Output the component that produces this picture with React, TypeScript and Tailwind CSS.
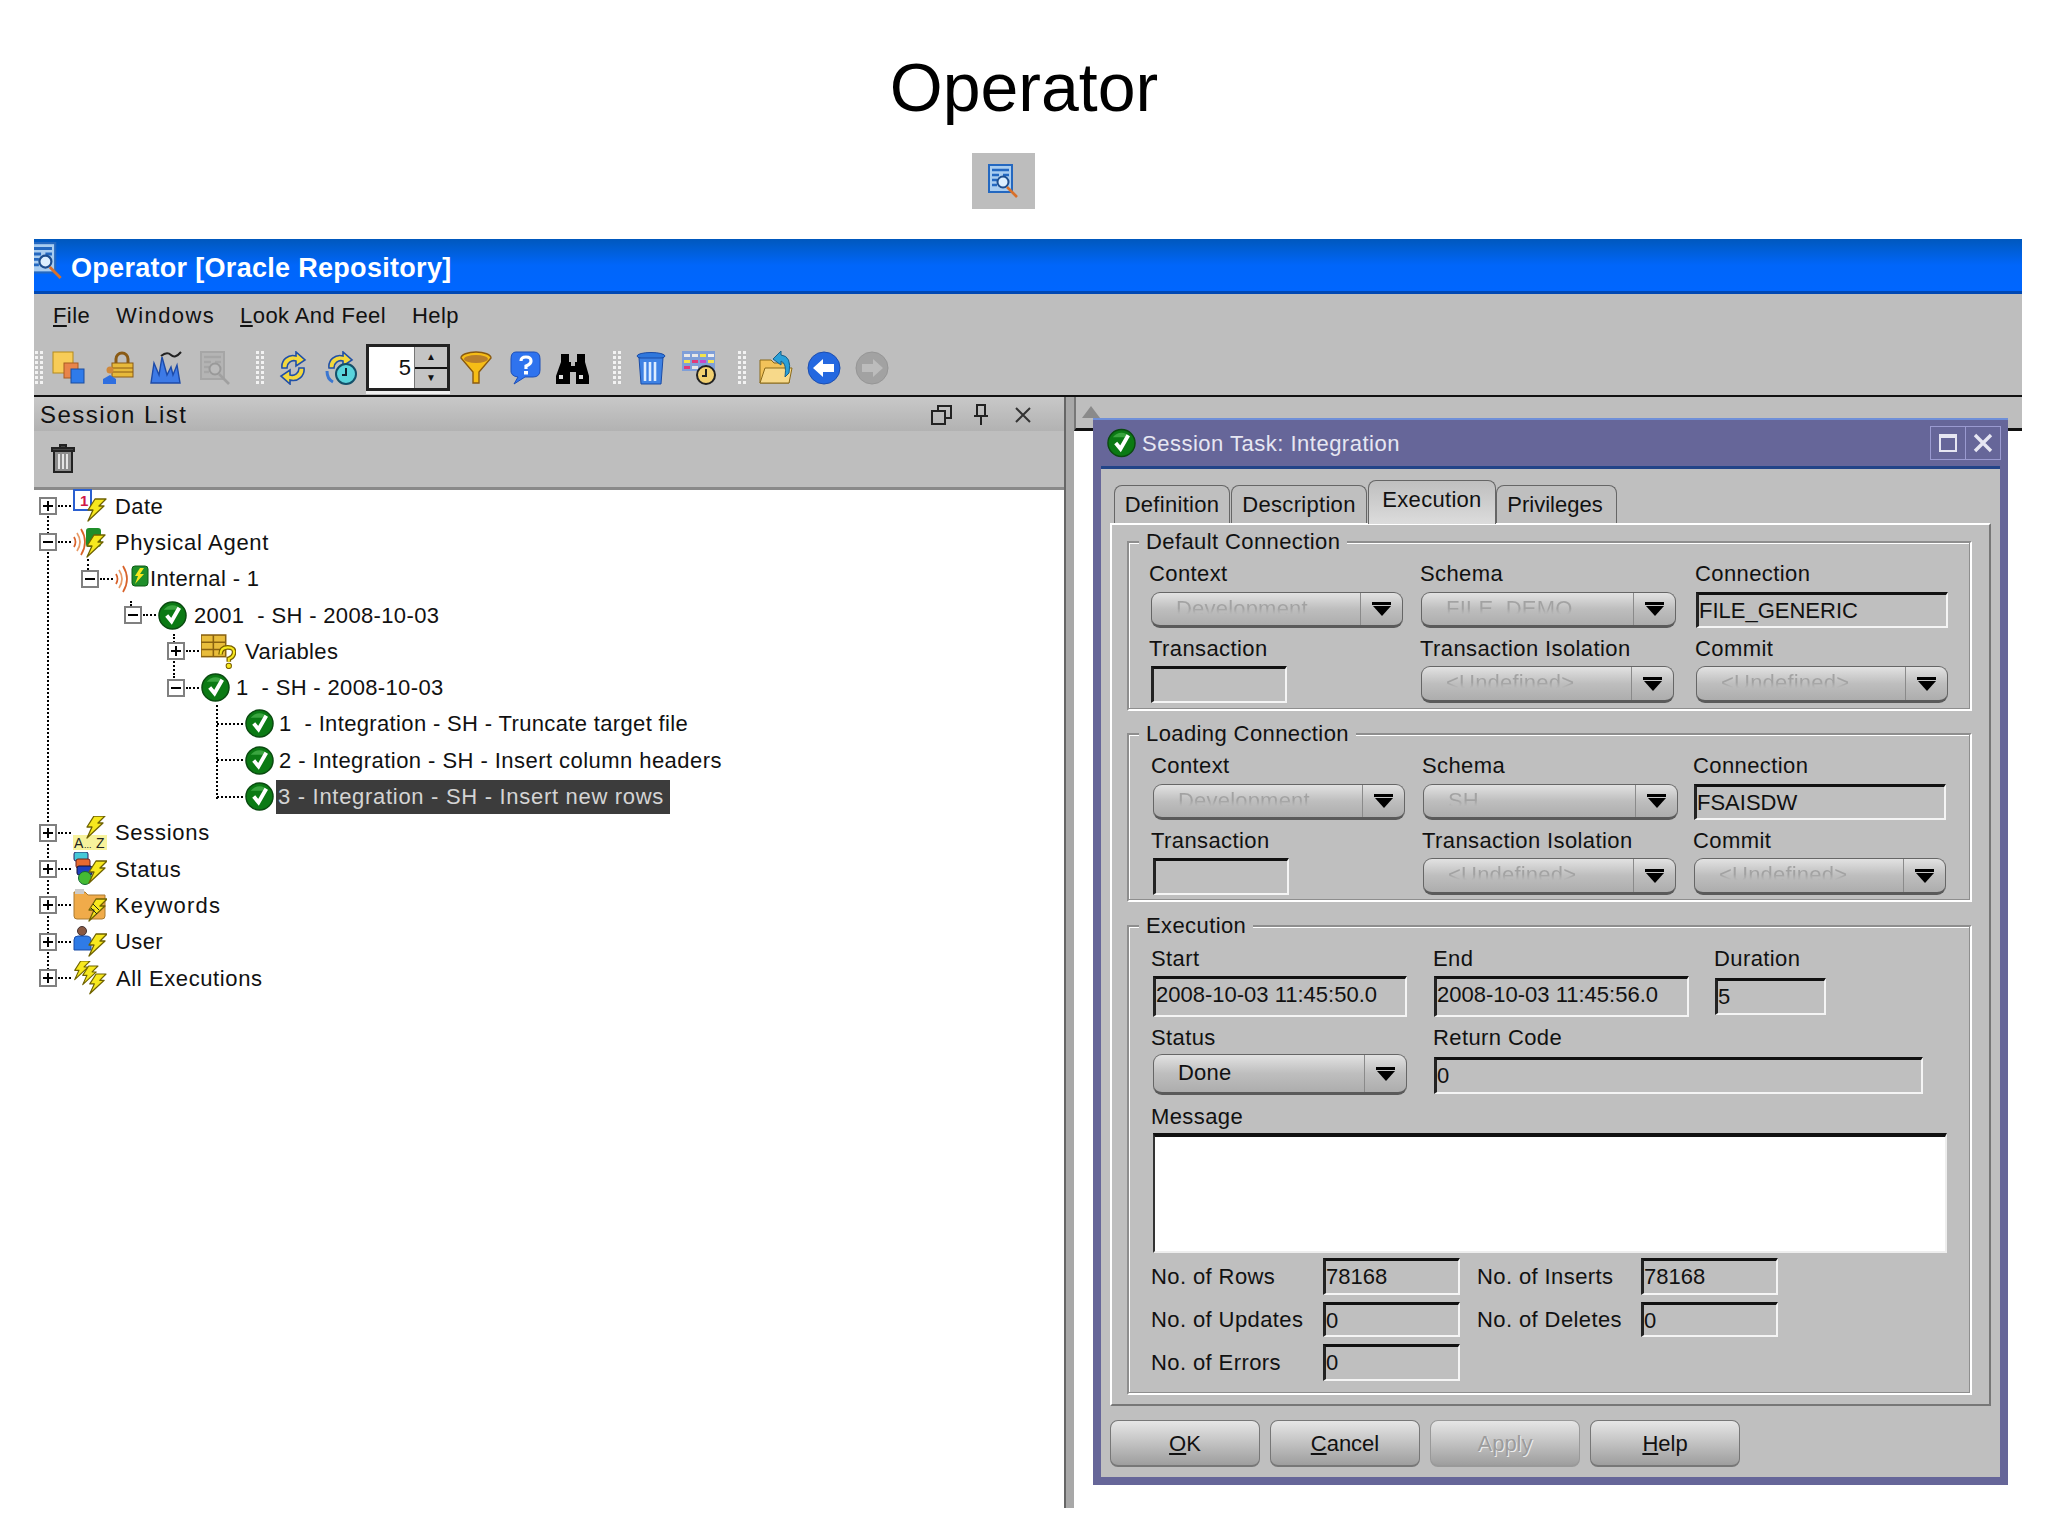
import type { ReactNode } from "react";

// small helpers for the repeated drawings
const Bolt = ({ x = 0, y = 0, s = 1 }: { x?: number; y?: number; s?: number }) => (
  <path
    transform={`translate(${x} ${y}) scale(${s})`}
    d="M9 0 L20 0 L13 7 L18 7 L2 22 L7 11 L2 11 Z"
    fill="#f7e81e"
    stroke="#6f6200"
    strokeWidth="1.3"
    strokeLinejoin="round"
  />
);

const Ico = ({ className = "w-[34px] h-[34px]", children }: { className?: string; children: ReactNode }) => (
  <svg viewBox="0 0 34 34" className={`${className} shrink-0`}>
    {children}
  </svg>
);

const DocSearch = ({ className, gray }: { className?: string; gray?: boolean }) => {
  const a = gray ? "#a6a6a6" : "#2468c0";
  const b = gray ? "#b4b4b4" : "#a9cdf0";
  return (
    <Ico className={className}>
      <rect x="2" y="1" width="23" height="27" fill={b} stroke={a} strokeWidth="2" />
      <path d="M5 6h17M5 11h7M16 11h6M5 16h5M5 21h5" stroke={a} strokeWidth="2.6" />
      <circle cx="16" cy="18" r="5.5" fill={gray ? "#bbb" : "#dcefff"} stroke={gray ? "#999" : "#1d4e8f"} strokeWidth="2" />
      <path d="M20 23 L30 33" stroke={gray ? "#a0a0a0" : "#d8702a"} strokeWidth="2.6" />
    </Ico>
  );
};

const Check = ({ className = "w-[29px] h-[29px]" }: { className?: string }) => (
  <svg viewBox="0 0 30 30" className={`${className} shrink-0`}>
    <circle cx="15" cy="15" r="14" fill="#0b7a14" stroke="#0a4a10" strokeWidth="1.5" />
    <path d="M6 9 A11 11 0 0 1 24 9 Z" fill="#3aa53f" />
    <path d="M9 15 L14 21 L22 7" fill="none" stroke="#fff" strokeWidth="4" />
  </svg>
);

const Radio = () => (
  <g fill="none" stroke="#d8622a" strokeWidth="1.7">
    <path d="M1 12 Q4 17 1 22" />
    <path d="M4 8 Q10 17 4 26" stroke="#e89a66" />
    <path d="M8 4 Q16 17 8 30" />
  </g>
);

const Refresh = () => (
  <path d="M6 17 A11 11 0 0 1 20 5 L20 1 L29 9 L20 15 L20 10 A7 7 0 0 0 11 17 Z" fill="#f3d83c" stroke="#1f4fa8" strokeWidth="1.6" />
);

const Grip = () => (
  <div className="w-[9px] h-[36px] shrink-0 bg-[radial-gradient(circle,#f2f2f2_1.5px,transparent_2px)] bg-[length:5px_5px]" />
);

function ToolIcons() {
  return (
    <>
      {/* new session */}
      <Ico className="ml-[9px] w-[34px] h-[34px]">
        <rect x="1" y="1" width="20" height="21" fill="#f7cc58" stroke="#b58a1a" />
        <rect x="12" y="12" width="14" height="15" fill="#e8844a" stroke="#a85a20" />
        <rect x="19" y="18" width="13" height="14" fill="#2f7bea" stroke="#1a4d9f" />
      </Ico>
      {/* lock */}
      <Ico className="ml-[16px] w-[34px] h-[34px]">
        <path d="M14 13 V8 A6 6 0 0 1 26 8 V13" fill="none" stroke="#8a5a14" strokeWidth="3" />
        <rect x="10" y="12" width="21" height="14" fill="#e7b93a" stroke="#8a5a14" />
        <path d="M10 17h21M10 21h21" stroke="#8a5a14" />
        <path d="M1 33 V28 L8 24 L14 28 V33 Z" fill="#2f6fe0" />
        <circle cx="8" cy="19" r="3.5" fill="#d0883a" />
      </Ico>
      {/* factory */}
      <Ico className="ml-[13px] w-[34px] h-[34px]">
        <path d="M2 32 L5 12 L10 24 L13 6 L18 24 L22 16 L24 24 L28 14 L31 32 Z" fill="#3d7ae6" stroke="#1c4aa8" strokeWidth="1.4" />
        <path d="M12 5 Q18 0 22 4 T32 1" fill="none" stroke="#222" strokeWidth="2" />
      </Ico>
      <DocSearch gray className="ml-[16px] w-[34px] h-[34px]" />
      <div className="ml-[22px]"><Grip /></div>
      {/* refresh */}
      <Ico className="ml-[12px] w-[34px] h-[34px]">
        <Refresh />
        <g transform="rotate(180 17 17)"><Refresh /></g>
      </Ico>
      {/* refresh at interval */}
      <Ico className="ml-[13px] w-[34px] h-[34px]">
        <Refresh />
        <path d="M4 20 Q4 28 10 31" fill="none" stroke="#3a76d0" strokeWidth="3" />
        <circle cx="23" cy="23" r="10" fill="#59d4dc" stroke="#14506a" strokeWidth="2" />
        <path d="M23 17 V24 H19" fill="none" stroke="#123" strokeWidth="2" />
      </Ico>
    </>
  );
}

function ToolIconsRight() {
  return (
    <>
      {/* filter */}
      <Ico className="ml-[9px] w-[34px] h-[34px]">
        <path d="M2 7 A15 6 0 0 1 32 7 L20 21 V32 H14 V21 Z" fill="#f6bd16" stroke="#8a5a10" strokeWidth="1.4" />
        <ellipse cx="17" cy="8" rx="12" ry="4" fill="#b87e2c" />
      </Ico>
      {/* help */}
      <Ico className="ml-[15px] w-[34px] h-[34px]">
        <path d="M8 1 H26 Q32 1 32 8 V19 Q32 26 25 26 H17 L6 33 L10 26 Q2 25 3 18 V8 Q3 1 8 1 Z" fill="#2f73ee" stroke="#1d4fb8" />
        <path d="M13 10 Q13 6 18 6 Q23 6 23 10 Q23 13 18 15 V18" fill="none" stroke="#fff" strokeWidth="3.2" />
        <rect x="16" y="20" width="4" height="3.5" fill="#fff" />
      </Ico>
      {/* find */}
      <Ico className="ml-[14px] w-[34px] h-[34px]">
        <path d="M5 3h8v8h2v4h4v-4h2V3h8v8l4 14v8H20V21h-6v12H0v-8l5-14Z" fill="#000" />
        <rect x="3" y="24" width="4" height="4" fill="#ddd" />
        <rect x="23" y="24" width="4" height="4" fill="#ddd" />
      </Ico>
      <div className="ml-[22px]"><Grip /></div>
      {/* delete */}
      <Ico className="ml-[13px] w-[34px] h-[34px]">
        <ellipse cx="17" cy="5" rx="14" ry="3.5" fill="#2f77dc" stroke="#1b4ca6" />
        <path d="M5 7 H29 L27 33 H7 Z" fill="#3e82e4" stroke="#1b4ca6" />
        <path d="M11 11 V30 M16 11 V30 M21 11 V30" stroke="#dcecff" strokeWidth="2.6" />
      </Ico>
      {/* schedule */}
      <Ico className="ml-[14px] w-[34px] h-[34px]">
        <rect x="0" y="0" width="33" height="20" fill="#7f9fd8" />
        <path d="M2 3h6v3H2zM10 3h6v3h-6z" fill="#e8e8e8" />
        <path d="M18 3h6v3h-6z" fill="#f4e44a" />
        <path d="M26 3h6v3h-6z" fill="#eee" />
        <path d="M2 9h6v3H2z" fill="#f4e44a" />
        <path d="M10 9h6v3h-6z" fill="#e03a7a" />
        <path d="M18 9h6v3h-6z" fill="#c848c8" />
        <path d="M26 9h6v3h-6z" fill="#f4e44a" />
        <path d="M2 15h6v3H2z" fill="#e03a7a" />
        <path d="M10 15h6v3h-6z" fill="#e8e8e8" />
        <circle cx="24" cy="24" r="9" fill="#f2d070" stroke="#222" strokeWidth="2" />
        <path d="M24 18 V25 H20" fill="none" stroke="#222" strokeWidth="2" />
      </Ico>
      <div className="ml-[21px]"><Grip /></div>
      {/* open folder */}
      <Ico className="ml-[13px] w-[34px] h-[34px]">
        <path d="M1 9 H12 L15 12 H30 V32 H1 Z" fill="#f2c35a" stroke="#8a6a1a" />
        <path d="M1 32 L6 17 H33 L30 32 Z" fill="#f7d98a" stroke="#8a6a1a" />
        <path d="M14 8 L22 0 V4 Q33 5 30 22 L26 26 Q28 12 22 10 V14 Z" fill="#2aa0d8" stroke="#15608a" />
      </Ico>
      {/* back */}
      <svg viewBox="0 0 34 34" className="ml-[14px] w-[34px] h-[34px] shrink-0">
        <circle cx="17" cy="17" r="16" fill="#2468e0" stroke="#1c4eb0" />
        <path d="M6 17 L16 8 V13 H27 V21 H16 V26 Z" fill="#fff" />
      </svg>
      {/* forward, disabled */}
      <svg viewBox="0 0 34 34" className="ml-[14px] w-[34px] h-[34px] shrink-0">
        <circle cx="17" cy="17" r="16" fill="#a2a2a2" stroke="#969696" />
        <path d="M28 17 L18 8 V13 H7 V21 H18 V26 Z" fill="#bcbcbc" />
      </svg>
    </>
  );
}

function Spinner() {
  return (
    <div className="ml-[9px] w-[84px] h-[47px] shrink-0 flex bg-white border-[3px] border-[#222] shadow-[0_3px_0_#eee]">
      <div className="flex-1 text-right pr-[3px] text-[22px] leading-[42px]">5</div>
      <div className="w-[33px] flex flex-col border-l border-[#777]">
        <div className="flex-1 bg-[#c4c4c4] border-b-2 border-[#111] flex items-center justify-center text-[10px] leading-none">▲</div>
        <div className="flex-1 bg-[#c4c4c4] flex items-center justify-center text-[10px] leading-none">▼</div>
      </div>
    </div>
  );
}

// tree icons
const DateIcon = () => (
  <Ico>
    <rect x="1" y="1" width="17" height="20" fill="#fff" stroke="#2a5fd0" strokeWidth="2" />
    <text x="7" y="17" fontSize="15" fontWeight="bold" fill="#d01848">1</text>
    <Bolt x={13} y={10} />
  </Ico>
);
const AgentIcon = () => (
  <Ico>
    <Radio />
    <rect x="13" y="3" width="15" height="19" rx="3" fill="#1f8e2a" />
    <Bolt x={12} y={10} />
  </Ico>
);
const InternalIcon = () => (
  <Ico>
    <Radio />
    <rect x="17" y="4" width="16" height="20" rx="3" fill="#1f8e2a" stroke="#0c5a14" />
    <path d="M25 6 L29 6 L25 12 L29 12 L20 22 L23 14 L20 14 Z" fill="#f7e81e" />
  </Ico>
);
const VarIcon = () => (
  <Ico className="w-[35px] h-[35px]">
    <rect x="0" y="1" width="24" height="21" fill="#e9bd3c" stroke="#8a6210" strokeWidth="1.5" />
    <path d="M0 8h24M0 15h24M12 1v21" stroke="#8a6210" strokeWidth="1.5" />
    <path d="M19 20 Q19 13 26 13 Q33 13 32 19 Q31 23 27 24 V27" fill="none" stroke="#7a6000" strokeWidth="4.5" />
    <path d="M19 20 Q19 13 26 13 Q33 13 32 19 Q31 23 27 24 V27" fill="none" stroke="#f7e81e" strokeWidth="2" />
    <circle cx="27" cy="31" r="2.6" fill="#f7e81e" stroke="#7a6000" />
  </Ico>
);
const SessIcon = () => (
  <Ico>
    <rect x="0" y="19" width="34" height="15" fill="#f7f29c" />
    <text x="1" y="32" fontSize="14" fill="#222">A</text>
    <text x="11" y="32" fontSize="9" fill="#222">...</text>
    <text x="23" y="32" fontSize="14" fill="#222">Z</text>
    <Bolt x={12} y={0} />
  </Ico>
);
const StatusIcon = () => (
  <Ico>
    <rect x="1" y="0" width="14" height="9" rx="2" fill="#45c8d8" stroke="#226" />
    <rect x="3" y="7" width="14" height="9" rx="2" fill="#e86a30" stroke="#622" />
    <rect x="4" y="14" width="15" height="9" rx="2" fill="#1e40c0" stroke="#113" />
    <circle cx="12" cy="26" r="6.5" fill="#44bb33" stroke="#163" />
    <Bolt x={14} y={9} />
  </Ico>
);
const KeyIcon = () => (
  <Ico>
    <path d="M1 4 H12 L15 7 H32 V28 Q32 31 29 31 H4 Q1 31 1 28 Z" fill="#f0ab4a" stroke="#aa7a30" />
    <rect x="2" y="1" width="9" height="5" fill="#ccc" />
    <Bolt x={14} y={11} />
    <path d="M20 16 L26 22 M18 20 L24 26" stroke="#222" />
  </Ico>
);
const UserIcon = () => (
  <Ico>
    <circle cx="9" cy="6" r="4.5" fill="#8a5a44" stroke="#433" />
    <path d="M1 25 V15 Q1 11 5 11 H13 Q18 11 18 15 V25 Z" fill="#2f7be6" stroke="#1b4ca6" />
    <Bolt x={14} y={9} />
  </Ico>
);
const AllIcon = () => (
  <Ico>
    <Bolt x={0} y={0} s={0.85} />
    <Bolt x={8} y={5} s={0.85} />
    <Bolt x={15} y={13} s={0.9} />
  </Ico>
);

const Box = ({ open }: { open?: boolean }) => (
  <span className="relative z-10 w-[18px] h-[18px] shrink-0 bg-white border-2 border-[#808080] flex items-center justify-center">
    <span className="absolute w-[10px] h-[2px] bg-black" />
    {!open && <span className="absolute w-[2px] h-[10px] bg-black" />}
  </span>
);

const Dots = ({ className = "w-[13px]" }: { className?: string }) => (
  <span className={`${className} shrink-0 border-t-2 border-dotted border-black`} />
);

type Row = { pad: string; box?: "open" | "closed"; icon: ReactNode; text: string; gap: string; track?: string; sel?: boolean };

const rows: Row[] = [
  { pad: "pl-[5px]", box: "closed", icon: <DateIcon />, text: "Date", gap: "ml-[8px]", track: "tracking-[0.4px]" },
  { pad: "pl-[5px]", box: "open", icon: <AgentIcon />, text: "Physical Agent", gap: "ml-[8px]", track: "tracking-[0.7px]" },
  { pad: "pl-[47px]", box: "open", icon: <InternalIcon />, text: "Internal - 1", gap: "ml-[1px]" },
  { pad: "pl-[90px]", box: "open", icon: <Check />, text: "2001  - SH - 2008-10-03", gap: "ml-[7px]" },
  { pad: "pl-[133px]", box: "closed", icon: <VarIcon />, text: "Variables", gap: "ml-[9px]" },
  { pad: "pl-[133px]", box: "open", icon: <Check />, text: "1  - SH - 2008-10-03", gap: "ml-[6px]" },
  { pad: "pl-[183px]", icon: <Check />, text: "1  - Integration - SH - Truncate target file", gap: "ml-[5px]" },
  { pad: "pl-[183px]", icon: <Check />, text: "2 - Integration - SH - Insert column headers", gap: "ml-[5px]", track: "tracking-[0.45px]" },
  { pad: "pl-[183px]", icon: <Check />, text: "3 - Integration - SH - Insert new rows", gap: "ml-[2px]", sel: true },
  { pad: "pl-[5px]", box: "closed", icon: <SessIcon />, text: "Sessions", gap: "ml-[8px]", track: "tracking-[0.7px]" },
  { pad: "pl-[5px]", box: "closed", icon: <StatusIcon />, text: "Status", gap: "ml-[8px]", track: "tracking-[0.7px]" },
  { pad: "pl-[5px]", box: "closed", icon: <KeyIcon />, text: "Keywords", gap: "ml-[8px]", track: "tracking-[1.2px]" },
  { pad: "pl-[5px]", box: "closed", icon: <UserIcon />, text: "User", gap: "ml-[8px]", track: "tracking-[0.4px]" },
  { pad: "pl-[5px]", box: "closed", icon: <AllIcon />, text: "All Executions", gap: "ml-[9px]", track: "tracking-[0.6px]" },
];

function Tree() {
  return (
    <div className="flex-1 bg-white">
      <div className="relative -mt-[2px]">
        {/* tree guide lines */}
        <span className="absolute left-[13px] top-[20px] h-[466px] border-l-2 border-dotted border-black" />
        <span className="absolute left-[53px] top-[71px] h-[11px] border-l-2 border-dotted border-black" />
        <span className="absolute left-[96px] top-[113px] h-[8px] border-l-2 border-dotted border-black" />
        <span className="absolute left-[139px] top-[146px] h-[44px] border-l-2 border-dotted border-black" />
        <span className="absolute left-[182px] top-[217px] h-[94px] border-l-2 border-dotted border-black" />
        {rows.map((r) => (
          <div key={r.text} className={`relative h-[36.3px] flex items-center ${r.pad}`}>
            {r.box ? <Box open={r.box === "open"} /> : null}
            <Dots className={r.box ? "w-[13px] ml-[1px]" : "w-[26px]"} />
            <span className="ml-[2px] relative z-10 flex">{r.icon}</span>
            <span
              className={`${r.gap} whitespace-pre text-[22px] ${
                r.sel
                  ? "h-[34px] leading-[34px] w-[394px] pl-[2px] tracking-[0.7px] bg-[#3c3c3c] text-[#d4d4d4]"
                  : r.track ?? "tracking-[0.35px]"
              }`}
            >
              {r.text}
            </span>
          </div>
        ))}
      </div>
    </div>
  );
}

const Label = ({ children, className = "" }: { children: ReactNode; className?: string }) => (
  <div className={`h-[26px] leading-[26px] text-[22px] tracking-[0.4px] whitespace-nowrap ${className}`}>{children}</div>
);

const Combo = ({ value, className = "w-[252px] h-[36px]", off = true }: { value: string; className?: string; off?: boolean }) => (
  <div className={`${className} flex rounded-[9px] border border-[#666] border-b-[3px] border-b-[#5a5a5a] bg-linear-to-b from-[#e2e2e2] via-[#bebebe] to-[#adadad] overflow-hidden`}>
    <div className="flex-1 pl-[24px]">
      {off ? (
        <div className="leading-[31px] text-[22px] tracking-[0.2px] whitespace-nowrap bg-linear-to-b from-[#a2a2a2] from-[50%] to-transparent to-[68%] bg-clip-text text-transparent">{value}</div>
      ) : (
        <div className="leading-[36px] text-[22px] tracking-[0.2px] text-[#111]">{value}</div>
      )}
    </div>
    <div className="w-[42px] h-full border-l border-[#8a8a8a] flex flex-col items-center justify-center gap-[1px]">
      <span className="w-[19px] h-[3px] bg-black" />
      <span className="w-0 h-0 border-x-[9px] border-x-transparent border-t-[10px] border-t-black" />
    </div>
  </div>
);

const Field = ({ value = "", className = "" }: { value?: string; className?: string }) => (
  <div className={`${className} bg-[#bfbfbf] border-t-[3px] border-l-[3px] border-t-[#111] border-l-[#222] border-b-2 border-r-2 border-b-[#f4f4f4] border-r-[#f4f4f4] text-[22px] leading-[31px] whitespace-nowrap`}>
    {value}
  </div>
);

const Group = ({ title, className, children }: { title: string; className: string; children: ReactNode }) => (
  <div className={`relative w-[845px] border-2 border-t-[#8e8e8e] border-l-[#8e8e8e] border-r-white border-b-white shadow-[inset_-1px_-1px_0_#8e8e8e,inset_1px_1px_0_#fff] ${className}`}>
    <div className="absolute left-[10px] -top-[14px] bg-[#bfbfbf] px-[7px] h-[26px] leading-[26px] text-[22px] tracking-[0.4px] whitespace-nowrap">
      {title}
    </div>
    {children}
  </div>
);

const ConnectionGrid = ({ cols, ctx, schema, conn, pad }: { cols: string; ctx: string; schema: string; conn: string; pad: string }) => (
  <div className={`grid ${cols} ${pad} gap-y-[8px]`}>
    <div>
      <Label className="mb-[5px] -ml-[2px]">Context</Label>
      <Combo value={ctx} />
    </div>
    <div>
      <Label className="mb-[5px] -ml-[1px]">Schema</Label>
      <Combo value={schema} className="w-[255px] h-[36px]" />
    </div>
    <div>
      <Label className="mb-[5px] -ml-[1px]">Connection</Label>
      <Field value={conn} className="w-[252px] h-[36px]" />
    </div>
    <div>
      <Label className="mb-[4px] -ml-[2px]">Transaction</Label>
      <Field className="w-[136px] h-[37px]" />
    </div>
    <div>
      <Label className="mb-[4px] -ml-[1px]">Transaction Isolation</Label>
      <Combo value="<Undefined>" className="w-[253px] h-[37px]" />
    </div>
    <div>
      <Label className="mb-[4px] -ml-[1px]">Commit</Label>
      <Combo value="<Undefined>" className="w-[252px] h-[37px]" />
    </div>
  </div>
);

const Btn = ({ u, rest, off }: { u?: string; rest: string; off?: boolean }) => (
  <div
    className={`w-[150px] h-[47px] rounded-[8px] border border-[#777] border-b-2 bg-linear-to-b from-[#e6e6e6] via-[#c2c2c2] to-[#9e9e9e] flex items-center justify-center text-[22px] ${
      off ? "text-[#9c9c9c] [text-shadow:1px_1px_0_#eee] border-[#999]" : "text-[#111]"
    }`}
  >
    <span>
      {u && <span className="underline">{u}</span>}
      {rest}
    </span>
  </div>
);

function SessionDialog() {
  return (
    <div className="absolute left-[19px] top-[21px] w-[915px] h-[1067px] bg-[#666699] border-t-2 border-t-[#6f8fd8] flex flex-col">
      <div className="h-[46px] shrink-0 flex items-center pl-[14px] pr-[7px]">
        <Check className="w-[29px] h-[30px]" />
        <span className="ml-[6px] text-[22px] tracking-[0.5px] text-[#e6e6f2]">Session Task: Integration</span>
        <div className="ml-auto flex h-[34px] border border-[#9a9ad0]">
          <div className="w-[35px] flex items-center justify-center border-r border-[#9a9ad0]">
            <span className="w-[18px] h-[18px] border-2 border-t-[4px] border-[#e6e6f2]" />
          </div>
          <div className="w-[34px] flex items-center justify-center">
            <svg viewBox="0 0 20 20" className="w-[20px] h-[20px]" fill="none" stroke="#e6e6f2" strokeWidth="3.4">
              <path d="M2 2 L18 18 M18 2 L2 18" />
            </svg>
          </div>
        </div>
      </div>
      <div className="mx-[8px] mb-[8px] flex-1 bg-[#bfbfbf] border-t-[3px] border-t-[#224488] flex flex-col">
        {/* tabs */}
        <div className="mt-[11px] h-[43px] shrink-0 pl-[13px] flex items-end">
          {[
            ["Definition", "w-[116px]"],
            ["Description", "w-[136px]"],
          ].map(([t, w]) => (
            <div key={t} className={`${w} h-[38px] mr-[1px] rounded-t-[8px] border border-b-0 border-[#666] text-center text-[22px] tracking-[0.3px] leading-[38px]`}>{t}</div>
          ))}
          <div className="w-[128px] h-[44px] relative z-10 -mb-[1px] rounded-t-[8px] border border-b-0 border-[#666] bg-linear-to-b from-[#bfbfbf] to-[#dcdcdc] text-center text-[22px] tracking-[0.3px] leading-[38px]">Execution</div>
          <div className="w-[121px] h-[38px] rounded-t-[8px] border border-b-0 border-[#666] text-center text-[22px] leading-[38px] pr-[3px]">Privileges</div>
        </div>
        {/* tab body */}
        <div className="ml-[9px] w-[881px] h-[883px] shrink-0 border-2 border-t-white border-l-white border-r-[#777] border-b-[#777] pt-[16px] pl-[15px]">
          <Group title="Default Connection" className="h-[170px] pt-[18px]">
            <ConnectionGrid cols="grid-cols-[270px_275px_252px]" pad="pl-[22px]" ctx="Development" schema="FILE_DEMO" conn="FILE_GENERIC" />
          </Group>
          <Group title="Loading Connection" className="h-[169px] mt-[22px] pt-[18px]">
            <ConnectionGrid cols="grid-cols-[270px_271px_252px]" pad="pl-[24px]" ctx="Development" schema="SH" conn="FSAISDW" />
          </Group>
          <Group title="Execution" className="h-[470px] mt-[23px] pt-[19px] pl-[24px]">
            <div className="flex">
              <div className="w-[281px]">
                <Label className="mb-[4px] -ml-[2px]">Start</Label>
                <Field value="2008-10-03 11:45:50.0" className="w-[254px] h-[41px]" />
              </div>
              <div className="w-[281px]">
                <Label className="mb-[4px] -ml-[1px]">End</Label>
                <Field value="2008-10-03 11:45:56.0" className="w-[255px] h-[41px]" />
              </div>
              <div>
                <Label className="mb-[6px] -ml-[1px]">Duration</Label>
                <Field value="5" className="w-[111px] h-[37px]" />
              </div>
            </div>
            <div className="flex mt-[8px]">
              <div className="w-[281px]">
                <Label className="mb-[3px] -ml-[2px]">Status</Label>
                <Combo value="Done" off={false} className="w-[254px] h-[41px]" />
              </div>
              <div>
                <Label className="mb-[6px] -ml-[1px]">Return Code</Label>
                <Field value="0" className="w-[489px] h-[37px]" />
              </div>
            </div>
            <Label className="mt-[9px] mb-[3px] -ml-[2px]">Message</Label>
            <div className="w-[794px] h-[120px] bg-white border-t-[4px] border-t-[#111] border-l-2 border-l-[#333] border-b-2 border-r-2 border-b-[#eee] border-r-[#eee]" />
            <div className="mt-[5px] grid grid-cols-[172px_137px_17px_164px_137px] gap-y-[7px] -ml-[2px]">
              <Label className="self-center">No. of Rows</Label>
              <Field value="78168" className="h-[37px]" />
              <span />
              <Label className="self-center">No. of Inserts</Label>
              <Field value="78168" className="h-[37px]" />
              <Label className="self-center">No. of Updates</Label>
              <Field value="0" className="h-[35px]" />
              <span />
              <Label className="self-center">No. of Deletes</Label>
              <Field value="0" className="h-[35px]" />
              <Label className="self-center">No. of Errors</Label>
              <Field value="0" className="h-[37px]" />
            </div>
          </Group>
        </div>
        {/* buttons */}
        <div className="mt-[14px] ml-[9px] flex gap-[10px]">
          <Btn u="O" rest="K" />
          <Btn u="C" rest="ancel" />
          <Btn rest="Apply" off />
          <Btn u="H" rest="elp" />
        </div>
      </div>
    </div>
  );
}

export default function App() {
  return (
    <div className="w-[2048px] h-[1536px] bg-white flex flex-col text-[#111] font-['Liberation_Sans',Arial,sans-serif]">
      <h1 className="pt-[47px] h-[153px] shrink-0 text-center text-[68px] leading-[80px] font-normal text-black">Operator</h1>
      <div className="ml-[972px] w-[63px] h-[56px] shrink-0 bg-[#bdbdbd] flex items-center justify-center">
        <DocSearch className="w-[34px] h-[34px]" />
      </div>

      {/* application window */}
      <div className="mt-[30px] ml-[34px] w-[1988px] h-[1269px] flex flex-col bg-white">
        <div className="h-[55px] shrink-0 relative bg-linear-to-b from-[#0058bd] via-[#0066fa] to-[#0066ff] border-b-[3px] border-[#0048b4] flex items-center overflow-hidden">
          <DocSearch className="-ml-[6px] -mt-[10px] w-[37px] h-[37px]" />
          <span className="ml-[6px] pt-[6px] text-[27px] tracking-[0.3px] font-bold text-white whitespace-nowrap">Operator [Oracle Repository]</span>
        </div>
        <div className="h-[46px] shrink-0 bg-[#bebebe] flex items-center pl-[19px] pb-[4px] text-[22px] tracking-[0.4px]">
          <span><span className="underline">F</span>ile</span>
          <span className="ml-[26px] tracking-[1.4px]">Windows</span>
          <span className="ml-[25px]"><span className="underline">L</span>ook And Feel</span>
          <span className="ml-[26px]">Help</span>
        </div>
        <div className="h-[57px] shrink-0 bg-[#bebebe] border-b-2 border-[#111] flex items-center">
          <Grip />
          <ToolIcons />
          <Spinner />
          <ToolIconsRight />
        </div>

        <div className="flex-1 flex min-h-0">
          {/* session list */}
          <div className="w-[1032px] shrink-0 flex flex-col border-r-2 border-[#666]">
            <div className="h-[34px] shrink-0 relative bg-linear-to-b from-[#c8c8c8] via-[#bdbdbd] to-[#b2b2b2] flex items-center px-[6px] pt-[2px]">
              <span className="text-[24px] tracking-[1.5px]">Session List</span>
              <div className="ml-auto flex items-center">
                <svg viewBox="0 0 22 20" className="w-[22px] h-[20px] mr-[20px]" fill="none" stroke="#222" strokeWidth="2">
                  <rect x="1" y="6" width="13" height="13" />
                  <path d="M7 5 V1 H20 V13 H15" />
                </svg>
                <svg viewBox="0 0 16 22" className="w-[16px] h-[22px] mr-[26px]" fill="none" stroke="#222" strokeWidth="2">
                  <path d="M4 1 H12 V12 H4 Z M1 12 H15 M8 12 V21" />
                </svg>
                <svg viewBox="0 0 16 16" className="w-[16px] h-[16px] mr-[27px]" fill="none" stroke="#333" strokeWidth="2">
                  <path d="M1 1 L15 15 M15 1 L1 15" />
                </svg>
              </div>
            </div>
            <div className="h-[59px] shrink-0 bg-[#bebebe] border-b-[3px] border-[#8a8a8a] flex items-center pl-[17px]">
              <svg viewBox="0 0 24 30" className="w-[24px] h-[30px]" fill="none" stroke="#222" strokeWidth="2">
                <path d="M9 3 V1 H15 V3 M1 4 H23 V7 H1 Z" fill="#444" />
                <path d="M3 7 H21 V28 H3 Z" fill="#8c8c8c" />
                <path d="M8 10 V25 M12 10 V25 M16 10 V25" stroke="#e4e4e4" />
              </svg>
            </div>
            <Tree />
          </div>
          <div className="w-[8px] shrink-0 bg-[#a8a8a8]" />
          {/* desktop pane */}
          <div className="relative flex-1 bg-white">
            <div className="h-[34px] pt-[9px] bg-[#bebebe] border-b-[3px] border-[#111] border-l-2 border-l-[#777]">
              <span className="block ml-[6px] w-0 h-0 border-x-[9px] border-x-transparent border-b-[12px] border-b-[#8a8a8a]" />
            </div>
            <SessionDialog />
          </div>
        </div>
      </div>
    </div>
  );
}
